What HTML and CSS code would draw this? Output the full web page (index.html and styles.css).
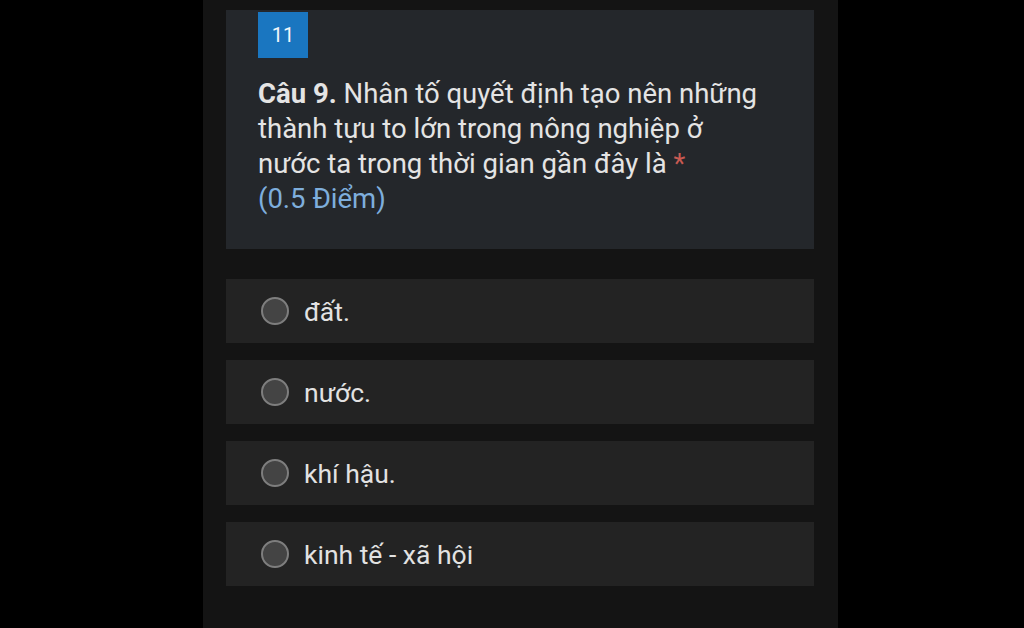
FILE: index.html
```html
<!DOCTYPE html>
<html lang="vi">
<head>
<meta charset="utf-8">
<link rel="stylesheet" href="styles.css">
</head>
<body>
<div class="page">
  <main class="panel">
    <section class="question">
      <div class="badge">11</div>
      <p class="qtext"><b>Câu 9.</b> Nhân tố quyết định tạo nên những thành tựu to lớn trong nông nghiệp ở nước ta trong thời gian gần đây là <span class="req">*</span><br><span class="points">(0.5 Điểm)</span></p>
    </section>
    <ul class="options">
      <li class="option"><span class="radio"></span><span class="label">đất.</span></li>
      <li class="option"><span class="radio"></span><span class="label">nước.</span></li>
      <li class="option"><span class="radio"></span><span class="label">khí hậu.</span></li>
      <li class="option"><span class="radio"></span><span class="label">kinh tế - xã hội</span></li>
    </ul>
  </main>
</div>
</body>
</html>
```
FILE: styles.css
```css
html, body {
  margin: 0;
  padding: 0;
  background: #000;
  font-family: Roboto, "Noto Sans", sans-serif;
}
.page {
  display: flex;
  justify-content: flex-start;
  height: 628px;
  overflow: hidden;
}
.panel {
  margin-left: 203px;
  width: 635px;
  height: 628px;
  background: #141414;
  padding: 10px 24px 0 23px;
  box-sizing: border-box;
}
.question {
  background: #24272b;
  height: 239px;
  box-sizing: border-box;
  padding: 2px 32px 0 32px;
}
.badge {
  width: 50px;
  height: 46px;
  background: #1a76c0;
  color: #f2f6fa;
  font-size: 20px;
  display: flex;
  align-items: center;
  justify-content: center;
}
.qtext {
  margin: 18px 0 0 0;
  color: #e4e4e4;
  font-size: 27.5px;
  line-height: 35px;
  width: 505px;
}
.qtext b {
  font-weight: 700;
}
.req {
  color: #c85a52;
}
.points {
  color: #7eaedc;
}
.options {
  list-style: none;
  margin: 30px 0 0 0;
  padding: 0;
  display: flex;
  flex-direction: column;
  gap: 17px;
}
.option {
  height: 64px;
  background: #232323;
  display: flex;
  align-items: center;
  padding-left: 35px;
  box-sizing: border-box;
}
.radio {
  width: 24px;
  height: 24px;
  border: 2px solid #7e7e7e;
  border-radius: 50%;
  background: #444;
  flex: none;
}
.label {
  margin-left: 15px;
  color: #e2e2e2;
  font-size: 26.5px;
}
```
